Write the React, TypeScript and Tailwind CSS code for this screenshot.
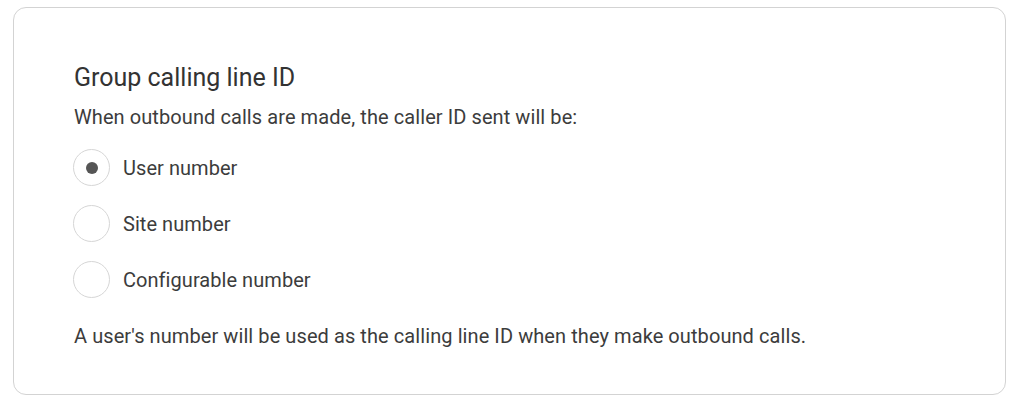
import React from "react";

const options = ["User number", "Site number", "Configurable number"];

export default function App() {
  const selected = 0;
  return (
    <div className="w-[1012px] h-[404px] bg-white pt-[7px] pl-[13px]" style={{ fontFamily: "Roboto, 'Noto Sans', sans-serif" }}>
      <div className="w-[993px] h-[388px] border border-[#d3d3d3] rounded-[13px] pl-[60px] pt-[54px] text-[#3c3c3c]">
        <h2 className="text-[25px] leading-[32px] text-[#333]">Group calling line ID</h2>
        <p className="mt-[9px] text-[20px] leading-[28px] tracking-[0.08px]">When outbound calls are made, the caller ID sent will be:</p>
        <div className="mt-[18px] flex flex-col gap-[19px] -ml-[1px]">
          {options.map((o, i) => (
            <label key={o} className="flex items-center gap-[13px] h-[37px]">
              <span className="w-[37px] h-[37px] rounded-full border border-[#d6d6d6] flex items-center justify-center">
                {i === selected && <span className="w-[12px] h-[12px] rounded-full bg-[#555]" />}
              </span>
              <span className="text-[20px] leading-[28px] tracking-[0.05px]">{o}</span>
            </label>
          ))}
        </div>
        <p className="mt-[24px] text-[20px] leading-[28px] tracking-[0.08px]">A user's number will be used as the calling line ID when they make outbound calls.</p>
      </div>
    </div>
  );
}
